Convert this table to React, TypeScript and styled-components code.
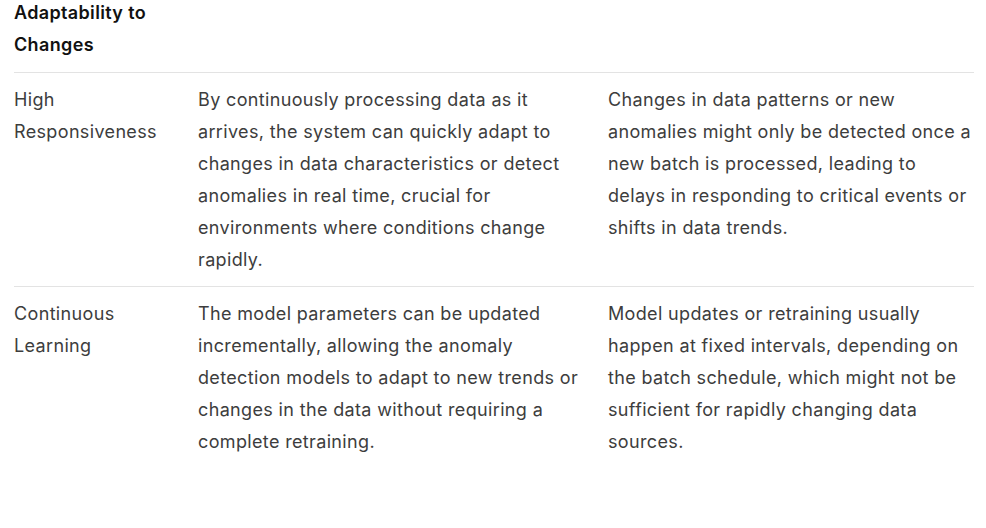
import React from "react";
import styled, { createGlobalStyle } from "styled-components";

const Global = createGlobalStyle`
  html, body { margin: 0; padding: 0; background: #ffffff; }
  body { font-family: Inter, "Noto Sans", sans-serif; }
`;

const Wrap = styled.div`
  padding: 0 0 0 14px;
  margin-top: -3px;
`;

const Table = styled.div`
  display: grid;
  grid-template-columns: 184px 410px 363px;
`;

const Divider = styled.div`
  grid-column: 1 / -1;
  height: 1px;
  background: #e3e3e3;
  width: 960px;
`;

const Cell = styled.div<{ $head?: boolean }>`
  font-size: 18px;
  line-height: 32px;
  letter-spacing: 0.35px;
  padding: ${(p) => (p.$head ? "0 20px 11px 0" : "11px 20px 10px 0")};
  color: ${(p) => (p.$head ? "#111111" : "#3d3d3d")};
  font-weight: ${(p) => (p.$head ? 600 : 400)};
  &:nth-child(4n + 3) { padding-right: 0; }
`;

const rows = [
  [
    "High Responsiveness",
    "By continuously processing data as it arrives, the system can quickly adapt to changes in data characteristics or detect anomalies in real time, crucial for environments where conditions change rapidly.",
    "Changes in data patterns or new anomalies might only be detected once a new batch is processed, leading to delays in responding to critical events or shifts in data trends.",
  ],
  [
    "Continuous Learning",
    "The model parameters can be updated incrementally, allowing the anomaly detection models to adapt to new trends or changes in the data without requiring a complete retraining.",
    "Model updates or retraining usually happen at fixed intervals, depending on the batch schedule, which might not be sufficient for rapidly changing data sources.",
  ],
];

export default function App() {
  return (
    <>
      <Global />
      <Wrap>
        <Table>
          <Cell $head>Adaptability to Changes</Cell>
          <Cell $head />
          <Cell $head />
          {rows.map((r, i) => (
            <React.Fragment key={i}>
              <Divider />
              {r.map((c, j) => (
                <Cell key={j}>{c}</Cell>
              ))}
            </React.Fragment>
          ))}
        </Table>
      </Wrap>
    </>
  );
}
